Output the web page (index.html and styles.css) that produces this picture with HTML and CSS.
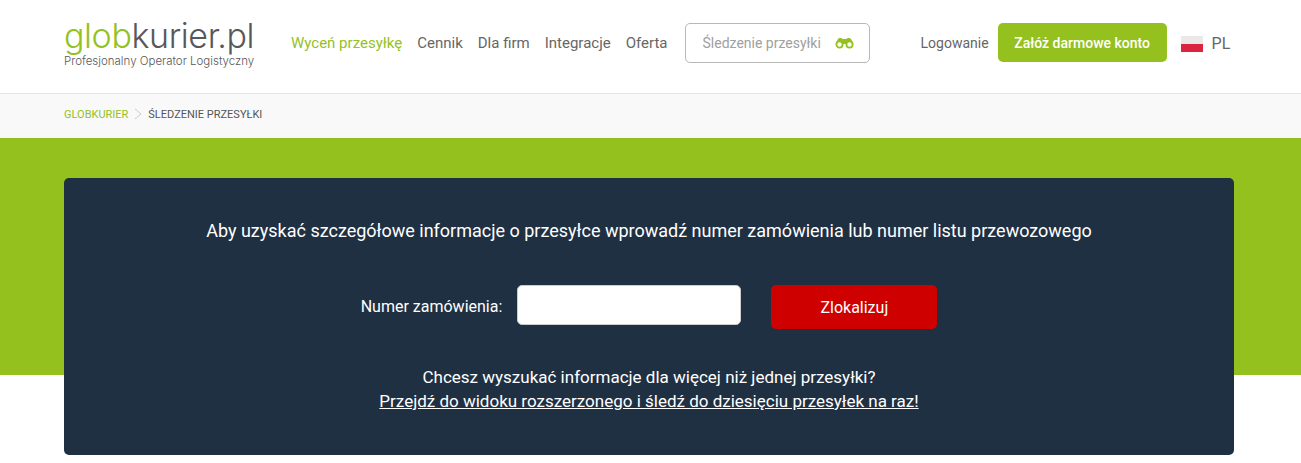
FILE: index.html
```html
<!DOCTYPE html>
<html lang="pl">
<head>
  <meta charset="UTF-8" />
  <meta name="viewport" content="width=device-width, initial-scale=1.0"/>
  <title>Śledzenie przesyłki</title>
  <link rel="stylesheet" href="styles.css">
</head>
<body>
  <header class="header">
    <a class="logo" href="#">
      <span class="logo-name"><span class="logo-green">glob</span>kurier.pl</span>
      <span class="logo-sub">Profesjonalny Operator Logistyczny</span>
    </a>
    <nav class="nav">
      <a class="active" href="#">Wyceń przesyłkę</a>
      <a href="#">Cennik</a>
      <a href="#">Dla firm</a>
      <a href="#">Integracje</a>
      <a href="#">Oferta</a>
    </nav>
    <a class="track" href="#">
      <span>Śledzenie przesyłki</span>
      <svg class="track-icon" width="19" height="12" viewBox="0 0 19 12">
        <path d="M0.5 7 L3 2 C3.5 0.5 7 0.5 7.5 2 H11.5 C12 0.5 15.5 0.5 16 2 L18.5 7 Z" fill="#95c11f"/>
        <circle cx="4.5" cy="7.5" r="3.1" fill="#fff" stroke="#95c11f" stroke-width="1.8"/>
        <circle cx="14.5" cy="7.5" r="3.1" fill="#fff" stroke="#95c11f" stroke-width="1.8"/>
      </svg>
    </a>
    <a class="login" href="#">Logowanie</a>
    <a class="register" href="#">Załóż darmowe konto</a>
    <span class="flag"></span>
    <span class="lang">PL</span>
  </header>

  <div class="breadcrumb">
    <a href="#">GLOBKURIER</a>
    <svg width="8" height="12" viewBox="0 0 8 12"><path d="M1 1 L7 6 L1 11" fill="none" stroke="#ccc" stroke-width="1"/></svg>
    <span>ŚLEDZENIE PRZESYŁKI</span>
  </div>

  <main class="hero">
    <section class="panel">
      <h1>Aby uzyskać szczegółowe informacje o przesyłce wprowadź numer zamówienia lub numer listu przewozowego</h1>
      <form class="search">
        <label for="number">Numer zamówienia:</label>
        <input type="text" id="number" />
        <button type="button">Zlokalizuj</button>
      </form>
      <p class="more">
        Chcesz wyszukać informacje dla więcej niż jednej przesyłki?<br>
        <a href="#">Przejdź do widoku rozszerzonego i śledź do dziesięciu przesyłek na raz!</a>
      </p>
    </section>
  </main>
</body>
</html>
```

FILE: styles.css
```css
* {
  box-sizing: border-box;
}

body {
  margin: 0;
  font-family: Roboto, Arial, sans-serif;
  color: #666;
  background: #fff;
}

a {
  text-decoration: none;
  color: inherit;
  white-space: nowrap;
}

.header {
  display: flex;
  align-items: center;
  height: 94px;
  padding: 0 71px 8px 64px;
  border-bottom: 1px solid #e5e5e5;
}

.logo {
  display: flex;
  flex-direction: column;
  flex: none;
  width: 227px;
}

.logo-name {
  font-family: Inter, sans-serif;
  font-weight: 300;
  font-size: 34px;
  line-height: 37px;
  color: #58585a;
  letter-spacing: -0.4px;
}

.logo-green {
  color: #95c11f;
}

.logo-sub {
  font-family: Inter, sans-serif;
  font-weight: 300;
  font-size: 11.5px;
  line-height: 14px;
  color: #58585a;
}

.nav {
  display: flex;
  flex: none;
  gap: 15px;
  font-size: 15px;
}

.nav .active {
  color: #95c11f;
}

.track {
  display: flex;
  flex: none;
  align-items: center;
  justify-content: space-between;
  width: 185px;
  height: 40px;
  margin-left: 17px;
  padding: 0 15px 0 17px;
  border: 1px solid #b8b8b8;
  border-radius: 5px;
  font-size: 14px;
  color: #a0a0a0;
}

.login {
  margin-left: 51px;
  font-size: 14px;
}

.register {
  display: flex;
  flex: none;
  align-items: center;
  justify-content: center;
  width: 169px;
  height: 39px;
  margin-left: 9px;
  border-radius: 5px;
  background: #95c11f;
  color: #fff;
  font-size: 14px;
  font-weight: 500;
}

.flag {
  flex: none;
  width: 22px;
  height: 16px;
  margin: 2px 9px 0 14px;
  background: linear-gradient(#e9e9e9 50%, #dc233f 50%);
}

.lang {
  margin-top: 2px;
  font-size: 16px;
}

.breadcrumb {
  display: flex;
  align-items: center;
  gap: 6px;
  height: 44px;
  padding: 0 0 4px 64px;
  background: #f9f9f9;
  font-size: 11px;
  color: #555;
}

.breadcrumb a {
  color: #95c11f;
}

.hero {
  height: 325px;
  padding: 40px 67px 8px 64px;
  background: linear-gradient(#95c11f 237px, #fff 237px);
}

.panel {
  height: 277px;
  padding-top: 42px;
  border-radius: 5px;
  background: #203043;
  color: #fff;
  text-align: center;
}

.panel h1 {
  margin: 0;
  font-size: 18px;
  font-weight: 400;
  line-height: 22px;
}

.search {
  display: flex;
  align-items: flex-start;
  justify-content: center;
  height: 44px;
  margin: 43px 0 0;
  font-size: 16px;
}

.search label {
  line-height: 44px;
}

.search input {
  width: 224px;
  height: 40px;
  margin: 0 30px 0 15px;
  border: 1px solid #ccc;
  border-radius: 5px;
  background: #fff;
}

.search button {
  width: 166px;
  height: 44px;
  border: none;
  border-radius: 5px;
  background: #cf0000;
  color: #fff;
  font-family: inherit;
  font-size: 16px;
}

.more {
  margin: 36px 0 0;
  font-size: 17px;
  line-height: 24px;
}

.more a {
  text-decoration: underline;
}
```
